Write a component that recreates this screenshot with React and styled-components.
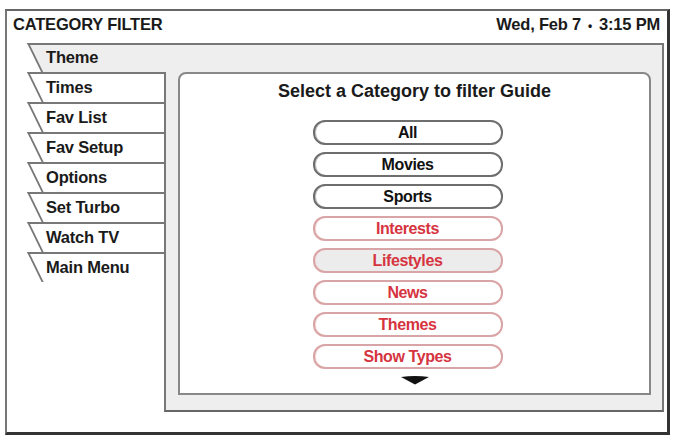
import styled, { createGlobalStyle } from "styled-components";

const GlobalStyle = createGlobalStyle`
html, body {
  margin: 0;
  padding: 0;
  background: #fff;
}
body {
  font-family: "Liberation Sans", Arial, sans-serif;
  color: #111;
}
`

const Frame = styled.div`
box-sizing: border-box;
width: 665px;
height: 426px;
margin: 9px 0 0 5px;
border-top: 2px solid #666;
border-left: 2px solid #777;
border-right: 3px solid #333;
border-bottom: 3px solid #333;
display: flex;
flex-direction: column;
`

const Header = styled.div`
display: flex;
justify-content: space-between;
align-items: center;
height: 26px;
padding: 0 7px 0 6px;
font-size: 16.5px;
font-weight: bold;
letter-spacing: -0.2px;
color: #1a1a1a;
`

const Dot = styled.span`
margin: 0 7px;
font-size: 12px;
`

const Folder = styled.div`
display: grid;
grid-template-columns: 137px 1fr;
grid-template-rows: 29px auto;
margin: 6px 3px 0 20px;
`

const ThemeTab = styled.div`
grid-column: 1 / 3;
position: relative;
z-index: 0;
overflow: hidden;
display: flex;
align-items: center;
padding-left: 19px;
border-right: 2px solid #777;
font-size: 16.5px;
letter-spacing: -0.2px;
font-weight: bold;
color: #1a1a1a;
&::before {
  content: "";
  position: absolute;
  top: 0;
  left: 0;
  right: -40px;
  bottom: 0;
  z-index: -1;
  background: #eeeeee;
  border-top: 2px solid #777;
  border-left: 2px solid #777;
  transform: skewX(26deg);
  transform-origin: top left;
}
`

const TabList = styled.div`
display: flex;
flex-direction: column;
overflow: hidden;
align-self: start;
`

const Tab = styled.div`
position: relative;
z-index: 0;
height: 30px;
display: flex;
align-items: center;
padding-left: 19px;
font-size: 16.5px;
letter-spacing: -0.2px;
font-weight: bold;
color: #1a1a1a;
&::before {
  content: "";
  position: absolute;
  top: 0;
  left: 0;
  right: -40px;
  bottom: ${p => (p.$last ? "-2px" : "0")};
  z-index: -1;
  background: #fff;
  border-top: 2px solid #777;
  border-left: 2px solid #777;
  border-bottom: ${p => (p.$last ? "2px solid #777" : "none")};
  transform: skewX(26deg);
  transform-origin: top left;
}
`

const Body = styled.div`
background: #eeeeee;
border-left: 2px solid #777;
border-right: 2px solid #777;
border-bottom: 2px solid #666;
padding: 0 11px 15px 12px;
height: 323px;
`

const Panel = styled.div`
box-sizing: border-box;
height: 100%;
background: #fff;
border: 2px solid #888;
border-radius: 8px 8px 0 0;
display: flex;
flex-direction: column;
align-items: center;
`

const Title = styled.div`
margin-top: 7px;
line-height: 20px;
font-size: 18px;
font-weight: bold;
color: #1a1a1a;
`

const List = styled.div`
display: flex;
flex-direction: column;
gap: 7px;
margin: 19px 14px 0 0;
`

const Button = styled.div`
box-sizing: border-box;
width: 190px;
height: 25px;
display: flex;
align-items: center;
justify-content: center;
border-radius: 12px;
border: 2px solid ${p => (p.$red ? "#d9a4a6" : "#6e6e6e")};
box-shadow: inset 1px 0 0 ${p => (p.$red ? "#f3d6d7" : "#bbb")};
background: ${p => (p.$active ? "#ececec" : "#fff")};
color: ${p => (p.$red ? "#d6343f" : "#111")};
font-size: 16px;
letter-spacing: -0.4px;
font-weight: bold;
`

const More = styled.svg`
margin: 7px 0 0 0;
`

const TABS = ["Times", "Fav List", "Fav Setup", "Options", "Set Turbo", "Watch TV", "Main Menu"]

const CATEGORIES = [
    { title: "All" },
    { title: "Movies" },
    { title: "Sports" },
    { title: "Interests", red: true },
    { title: "Lifestyles", red: true, active: true },
    { title: "News", red: true },
    { title: "Themes", red: true },
    { title: "Show Types", red: true },
]

const App = () => {
    return (
        <>
            <GlobalStyle />
            <Frame>
                <Header>
                    <span>CATEGORY FILTER</span>
                    <span>Wed, Feb 7<Dot>•</Dot>3:15 PM</span>
                </Header>
                <Folder>
                    <ThemeTab>Theme</ThemeTab>
                    <TabList>
                        {TABS.map((tab, idx) => (
                            <Tab key={idx} $last={idx === TABS.length - 1}>{tab}</Tab>
                        ))}
                    </TabList>
                    <Body>
                        <Panel>
                            <Title>Select a Category to filter Guide</Title>
                            <List>
                                {CATEGORIES.map((cat, idx) => (
                                    <Button key={idx} $red={cat.red} $active={cat.active}>{cat.title}</Button>
                                ))}
                            </List>
                            <More width="28" height="9" viewBox="0 0 28 9">
                                <path d="M0 1 Q14 -1 28 1 L14 8.5 Z" fill="#111" />
                            </More>
                        </Panel>
                    </Body>
                </Folder>
            </Frame>
        </>
    )
}

export default App;
